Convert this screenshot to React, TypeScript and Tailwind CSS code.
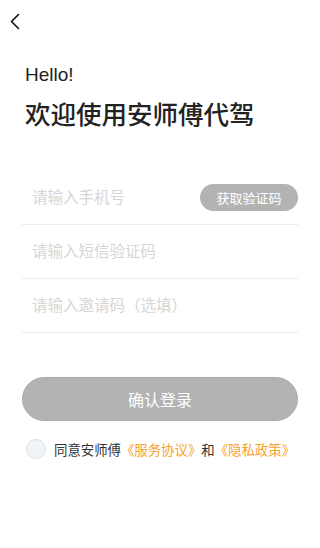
import React from "react";

export default function App() {
  const font = { fontFamily: '"Noto Sans CJK SC", "Noto Sans", sans-serif' };
  return (
    <div className="w-[320px] h-[548px] bg-white flex flex-col" style={font}>
      <div className="h-[42px] flex items-center pl-[9px]">
        <svg width="12" height="18" viewBox="0 0 12 18" fill="none">
          <path d="M9.5 2.5 L2.5 9.5 L9.5 16.5" stroke="#111" strokeWidth="1.6" strokeLinecap="round" strokeLinejoin="round" />
        </svg>
      </div>
      <div className="px-[25px] pt-[20px]">
        <div className="text-[19px] leading-[26px] text-[#222]" style={{ fontFamily: '"Liberation Sans", "Noto Sans CJK SC", sans-serif' }}>Hello!</div>
        <div className="mt-[7px] text-[25.5px] leading-[36px] text-[#222] font-medium">欢迎使用安师傅代驾</div>
      </div>
      <div className="mx-[22px] mt-[40px] flex flex-col">
        <div className="h-[54px] flex items-center justify-between border-b border-[#ececec]">
          <span className="pl-[10px] text-[15.5px] text-[#d6d6d6] -mt-[1px]">请输入手机号</span>
          <span className="h-[27px] w-[98px] rounded-full bg-[#b3b3b3] flex items-center justify-center text-[13px] text-white">获取验证码</span>
        </div>
        <div className="h-[54px] flex items-center border-b border-[#ececec]">
          <span className="pl-[10px] text-[15.5px] text-[#d6d6d6] -mt-[1px]">请输入短信验证码</span>
        </div>
        <div className="h-[54px] flex items-center border-b border-[#ececec]">
          <span className="pl-[10px] text-[15.5px] text-[#d6d6d6] -mt-[1px]">请输入邀请码（选填）</span>
        </div>
      </div>
      <div className="mx-[22px] mt-[44px] h-[44px] rounded-full bg-[#b3b3b3] border border-[#ababab] flex items-center justify-center text-[16px] text-white">
        确认登录
      </div>
      <div className="mt-[18px] ml-[26px] flex items-center">
        <span className="w-[20px] h-[20px] rounded-full bg-[#f0f3f7] border border-[#dcdfe3]" />
        <span className="ml-[8px] text-[13.4px] text-[#333]">
          同意安师傅<span className="text-[#f7a130]">《服务协议》</span>和<span className="text-[#f7a130]">《隐私政策》</span>
        </span>
      </div>
    </div>
  );
}
